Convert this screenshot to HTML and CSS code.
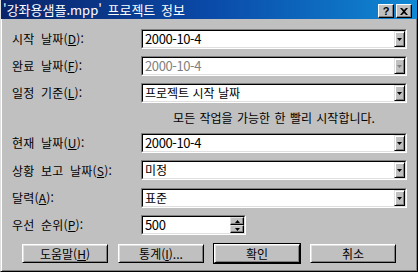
FILE: index.html
```html
<!DOCTYPE html>
<html lang="ko">
<head>
  <meta charset="UTF-8" />
  <title>프로젝트 정보</title>
  <link rel="stylesheet" href="styles.css">
</head>
<body>
  <div class="dialog">
    <!-- TITLE BAR -->
    <div class="titlebar">
      <span class="title">'강좌용샘플.mpp' 프로젝트 정보</span>
      <div class="title-buttons">
        <span class="tbtn help">?</span>
        <span class="tbtn">
          <svg width="8" height="7" viewBox="0 0 8 7"><path d="M0 0h2l2 2 2-2h2L5 3.5 8 7H6L4 5 2 7H0l3-3.5z" fill="#000"/></svg>
        </span>
      </div>
    </div>

    <!-- FORM -->
    <div class="form">
      <label class="label">시작 날짜(<u>D</u>):</label>
      <div class="field"><div class="field-inner">
        <span class="value num">2000-10-4</span>
        <span class="drop"><svg width="5" height="3"><polygon points="0,0 5,0 2.5,3" fill="#000"/></svg></span>
      </div></div>

      <label class="label">완료 날짜(<u>F</u>):</label>
      <div class="field disabled"><div class="field-inner">
        <span class="value num">2000-10-4</span>
        <span class="drop"><svg width="5" height="3"><polygon points="0,0 5,0 2.5,3" fill="#808080"/></svg></span>
      </div></div>

      <label class="label">일정 기준(<u>L</u>):</label>
      <div class="field"><div class="field-inner">
        <span class="value">프로젝트 시작 날짜</span>
        <span class="drop"><svg width="5" height="3"><polygon points="0,0 5,0 2.5,3" fill="#000"/></svg></span>
      </div></div>

      <span></span>
      <div class="note">모든 작업을 가능한 한 빨리 시작합니다.</div>

      <label class="label">현재 날짜(<u>U</u>):</label>
      <div class="field"><div class="field-inner">
        <span class="value num">2000-10-4</span>
        <span class="drop"><svg width="5" height="3"><polygon points="0,0 5,0 2.5,3" fill="#000"/></svg></span>
      </div></div>

      <label class="label">상황 보고 날짜(<u>S</u>):</label>
      <div class="field"><div class="field-inner">
        <span class="value">미정</span>
        <span class="drop"><svg width="5" height="3"><polygon points="0,0 5,0 2.5,3" fill="#000"/></svg></span>
      </div></div>

      <label class="label">달력(<u>A</u>):</label>
      <div class="field"><div class="field-inner">
        <span class="value">표준</span>
        <span class="drop"><svg width="5" height="3"><polygon points="0,0 5,0 2.5,3" fill="#000"/></svg></span>
      </div></div>

      <label class="label">우선 순위(<u>P</u>):</label>
      <div class="field spin"><div class="field-inner">
        <span class="value num">500</span>
        <span class="spin-btns">
          <span class="spin-btn"><svg width="5" height="3"><polygon points="0,3 5,3 2.5,0" fill="#000"/></svg></span>
          <span class="spin-btn"><svg width="5" height="3"><polygon points="0,0 5,0 2.5,3" fill="#000"/></svg></span>
        </span>
      </div></div>
    </div>

    <!-- BUTTONS -->
    <div class="buttons">
      <button class="btn">도움말(<u>H</u>)</button>
      <button class="btn">통계(<u>I</u>)...</button>
      <button class="btn default">확인</button>
      <button class="btn">취소</button>
    </div>
  </div>
</body>
</html>
```

FILE: styles.css
```css
* { margin: 0; padding: 0; box-sizing: border-box; }

body {
  background: #c0c0c0;
  font-family: "Noto Sans CJK KR", sans-serif;
  font-size: 12px;
  color: #000;
}

.dialog {
  width: 418px;
  height: 272px;
  background: #c0c0c0;
  border-left: 1px solid #dfdfdf;
  border-right: 1px solid #000;
  border-bottom: 1px solid #000;
  box-shadow: inset 1px 0 #fff, inset -1px -1px #808080;
}

.titlebar {
  height: 19px;
  display: flex;
  align-items: center;
  justify-content: space-between;
  padding: 0 5px 0 2px;
  background: linear-gradient(90deg, #0a246a 0%, #0a4aa8 50%, #1088d4 100%);
  color: #fff;
}

.title {
  font-size: 13px;
  line-height: 15px;
  word-spacing: 2px;
}

.title-buttons {
  display: flex;
  gap: 2px;
  margin-top: 3px;
}

.tbtn {
  width: 16px;
  height: 14px;
  display: flex;
  align-items: center;
  justify-content: center;
  background: #c0c0c0;
  border: 1px solid;
  border-color: #fff #000 #000 #fff;
  box-shadow: inset -1px -1px #808080;
  color: #000;
}

.help {
  font-family: "Liberation Sans", sans-serif;
  font-weight: bold;
  font-size: 11px;
  line-height: 12px;
}

.form {
  display: grid;
  grid-template-columns: 129px 266px;
  grid-template-rows: 20px 20px 20px 16px 20px 21px 20px 20px;
  row-gap: 7px;
  padding: 10px 0 0 11px;
}

.label {
  display: flex;
  align-items: center;
  line-height: 14px;
  white-space: nowrap;
  letter-spacing: 0.2px;
  word-spacing: 3px;
}

.field {
  border: 1px solid;
  border-color: #808080 #fff #fff #808080;
  height: 20px;
}

.field-inner {
  display: flex;
  height: 18px;
  background: #fff;
  border: 1px solid;
  border-color: #000 #dfdfdf #dfdfdf #000;
}

.value {
  flex: 1;
  padding-left: 2px;
  line-height: 16px;
  white-space: nowrap;
}

.num {
  font-size: 13px;
  letter-spacing: -0.4px;
}

.disabled .value {
  color: #808080;
}

.drop {
  width: 11px;
  height: 16px;
  display: flex;
  align-items: center;
  justify-content: center;
  background: #c0c0c0;
  border: 1px solid;
  border-color: #dfdfdf #000 #000 #dfdfdf;
  box-shadow: inset 1px 1px #fff, inset -1px -1px #808080;
}

.note {
  text-align: center;
  line-height: 16px;
  word-spacing: 1px;
}

.spin {
  width: 105px;
}

.spin-btns {
  display: flex;
  flex-direction: column;
  width: 14px;
}

.spin-btn {
  height: 8px;
  display: flex;
  align-items: center;
  justify-content: center;
  background: #c0c0c0;
  border: 1px solid;
  border-color: #dfdfdf #000 #000 #dfdfdf;
  box-shadow: inset -1px -1px #808080;
}

.buttons {
  display: flex;
  gap: 10px;
  padding-left: 21px;
  margin-top: 9px;
}

.btn {
  width: 86px;
  height: 19px;
  font-family: inherit;
  font-size: 12px;
  line-height: 14px;
  background: #c0c0c0;
  color: #000;
  border: 1px solid;
  border-color: #fff #000 #000 #fff;
  box-shadow: inset 1px 1px #dfdfdf, inset -1px -1px #808080;
}

.btn.default {
  outline: 1px solid #000;
}
```
